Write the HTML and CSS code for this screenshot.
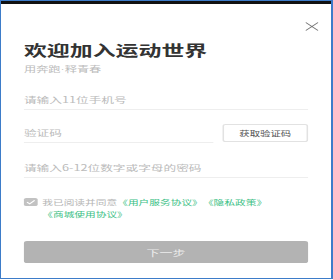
FILE: index.html
```html
<!DOCTYPE html>
<html lang="zh-CN">

<head>
    <meta charset="UTF-8">
    <meta name="viewport" content="width=device-width, initial-scale=1.0">
    <title>欢迎加入运动世界</title>
    <link rel="stylesheet" href="styles.css">
</head>

<body>
    <div class="frame">
        <div class="bar"></div>
        <div class="page">
            <div class="top">
                <svg class="close" width="9" height="9" viewBox="0 0 9 9">
                    <path d="M0.5 0.5 L8.5 8.5 M8.5 0.5 L0.5 8.5" stroke="#777" stroke-width="0.8" fill="none" />
                </svg>
            </div>
            <h1 class="title">欢迎加入运动世界</h1>
            <p class="sub">用奔跑·释青春</p>

            <div class="field phone">
                <input type="text" placeholder="请输入11位手机号">
            </div>
            <div class="code-row">
                <div class="field code">
                    <input type="text" placeholder="验证码">
                </div>
                <div class="get-code">获取验证码</div>
            </div>
            <div class="field pwd">
                <input type="password" placeholder="请输入6-12位数字或字母的密码">
            </div>

            <div class="agree">
                <span class="check">
                    <svg width="9" height="8" viewBox="0 0 9 8">
                        <path d="M2 4.2 L3.8 5.8 L7 2.4" stroke="#fff" stroke-width="0.9" fill="none" />
                    </svg>
                </span>
                <p class="agree-text">我已阅读并同意 <span class="link">《用户服务协议》</span> <span class="link">《隐私政策》</span> <span class="link">《商城使用协议》</span></p>
            </div>

            <div class="next">下一步</div>
        </div>
    </div>
</body>

</html>
```

FILE: styles.css
```css
* {
    margin: 0;
    padding: 0;
    box-sizing: border-box;
}

body {
    font-family: "Noto Sans CJK SC", "Noto Sans", sans-serif;
    background: #fff;
}

.frame {
    width: 333px;
    height: 279px;
    border: 1px solid #3d7cc9;
    border-right-width: 2px;
    overflow: hidden;
}

.bar {
    height: 3px;
    background: #111;
}

/* the shot is stretched sideways, so the page is drawn narrow and scaled */
.page {
    width: 216px;
    padding: 0 15px;
    transform: scaleX(1.5278);
    transform-origin: 0 0;
}

.top {
    height: 36px;
    padding-top: 18px;
    display: flex;
    justify-content: flex-end;
    margin-right: -7px;
}

.close {
    display: block;
}

.title {
    font-size: 15px;
    line-height: 20px;
    font-weight: 700;
    color: #333;
}

.sub {
    margin-top: 5px;
    font-family: "Liberation Sans", "Noto Sans CJK SC", sans-serif;
    font-size: 8px;
    line-height: 10px;
    color: #bbb;
}

.field {
    height: 21px;
    border-bottom: 1px solid #eee;
}

.field input {
    display: block;
    width: 100%;
    height: 20px;
    border: none;
    outline: none;
    background: transparent;
    font-family: inherit;
    font-size: 8.3px;
    line-height: 20px;
    color: #333;
}

.field input::placeholder {
    color: #bbb;
}

.phone {
    margin-top: 14px;
}

.code-row {
    margin-top: 12px;
    display: flex;
    gap: 6px;
}

.code-row .code {
    flex: 1;
}

.get-code {
    width: 56px;
    height: 18px;
    margin-top: 2px;
    border: 1px solid #e2e2e2;
    border-radius: 2px;
    font-size: 6.8px;
    line-height: 16px;
    text-align: center;
    color: #555;
}

.pwd {
    margin-top: 14px;
}

.agree {
    margin-top: 19px;
    display: flex;
    align-items: flex-start;
    gap: 3px;
}

.check {
    flex: none;
    width: 9px;
    height: 8px;
    margin-top: 1px;
    border-radius: 1.5px;
    background: #c2c2c2;
}

.check svg {
    display: block;
}

.agree-text {
    font-size: 7px;
    line-height: 11.5px;
    color: #b5b5b5;
    word-spacing: -1.5px;
}

.agree-text .link {
    display: inline-block;
    white-space: nowrap;
    word-spacing: 0;
    color: #3dbf86;
}

.next {
    margin-top: 21px;
    height: 22px;
    border-radius: 2px;
    background: #b3b3b3;
    color: #ececec;
    font-size: 8.5px;
    line-height: 22px;
    text-align: center;
}
```
